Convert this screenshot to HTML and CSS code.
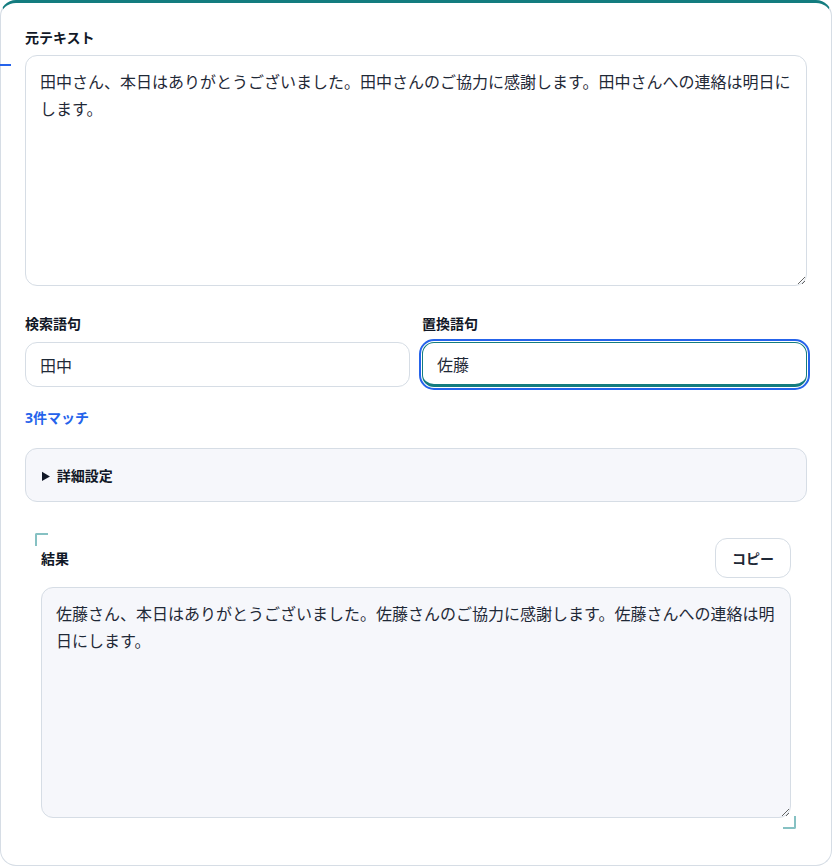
FILE: index.html
```html
<!DOCTYPE html>
<html lang="ja">
<head>
<meta charset="utf-8">
<title>置換</title>
<link rel="stylesheet" href="styles.css">
</head>
<body>
<main class="card">
  <span class="side-mark"></span>
  <label class="label" for="src">元テキスト</label>
  <textarea id="src" class="area">田中さん、本日はありがとうございました。田中さんのご協力に感謝します。田中さんへの連絡は明日にします。</textarea>

  <div class="fields">
    <div class="field">
      <label class="label label-field" for="find">検索語句</label>
      <input id="find" class="input" type="text" value="田中">
    </div>
    <div class="field">
      <label class="label label-field" for="repl">置換語句</label>
      <input id="repl" class="input input-focused" type="text" value="佐藤">
    </div>
  </div>

  <p class="matches">3件マッチ</p>

  <details class="advanced">
    <summary class="advanced-summary">詳細設定</summary>
  </details>

  <section class="result">
    <span class="bracket bracket-tl"></span>
    <span class="bracket bracket-br"></span>
    <div class="result-head">
      <span class="label result-label">結果</span>
      <button class="copy" type="button">コピー</button>
    </div>
    <textarea class="area area-result" readonly>佐藤さん、本日はありがとうございました。佐藤さんのご協力に感謝します。佐藤さんへの連絡は明日にします。</textarea>
  </section>
</main>
</body>
</html>
```
FILE: styles.css
```css
* { box-sizing: border-box; }

html, body {
  margin: 0;
  padding: 0;
  background: #ffffff;
}

body {
  font-family: "Noto Sans", "Noto Sans CJK JP", sans-serif;
  color: #1f2937;
}

.card {
  position: relative;
  width: 832px;
  height: 866px;
  background: #ffffff;
  border: 1px solid #d6dde5;
  border-top: 3px solid #137c7f;
  border-radius: 16px;
  padding: 24px 24px 24px 24px;
  display: flex;
  flex-direction: column;
}

.side-mark {
  position: absolute;
  left: -1px;
  top: 61px;
  width: 11px;
  height: 2px;
  background: #2563eb;
}

.label {
  display: block;
  font-family: "Noto Sans CJK JP", sans-serif;
  font-size: 14px;
  font-weight: 700;
  line-height: 20px;
  color: #111827;
  margin-bottom: 8px;
}

.label-field {
  margin-bottom: 9px;
}

.area {
  display: block;
  width: 100%;
  height: 231px;
  border: 1px solid #d6dde5;
  border-radius: 12px;
  padding: 12px 14px;
  font-family: "Noto Sans CJK JP", sans-serif;
  font-size: 16px;
  line-height: 27px;
  color: #1f2937;
  background: #ffffff;
  outline: none;
  resize: vertical;
}

.fields {
  margin-top: 27px;
  display: grid;
  grid-template-columns: 1fr 1fr;
  gap: 12px;
}

.field {
  display: flex;
  flex-direction: column;
}

.input {
  height: 45px;
  width: 100%;
  border: 1px solid #d6dde5;
  border-radius: 12px;
  padding: 0 14px;
  font-family: "Noto Sans CJK JP", sans-serif;
  font-size: 16px;
  color: #1f2937;
  background: #ffffff;
  outline: none;
}

.input-focused {
  border: 1px solid #137c7f;
  border-bottom-width: 3px;
  outline: 2px solid #2563eb;
  outline-offset: 1px;
}

.matches {
  margin: 21px 0 0;
  font-family: "Noto Sans", "Noto Sans CJK JP", sans-serif;
  font-size: 14px;
  font-weight: 700;
  line-height: 20px;
  color: #2563eb;
}

.advanced {
  margin-top: 20px;
  background: #f6f7fb;
  border: 1px solid #d6dde5;
  border-radius: 12px;
  padding: 16px;
}

.advanced-summary {
  font-family: "Noto Sans CJK JP", sans-serif;
  font-size: 14px;
  font-weight: 700;
  line-height: 20px;
  color: #111827;
  cursor: pointer;
}

.result {
  position: relative;
  margin-top: 16px;
  padding: 20px 16px 22px;
}

.bracket {
  position: absolute;
  width: 13px;
  height: 13px;
  border-color: #86c1c3;
  border-style: solid;
  border-width: 0;
}

.bracket-tl {
  left: 10px;
  top: 15px;
  border-top-width: 2px;
  border-left-width: 2px;
  border-top-left-radius: 2px;
}

.bracket-br {
  right: 11px;
  bottom: 11px;
  border-bottom-width: 2px;
  border-right-width: 2px;
  border-bottom-right-radius: 2px;
}

.result-head {
  display: flex;
  align-items: center;
  justify-content: space-between;
  height: 40px;
  margin-bottom: 9px;
}

.result-label {
  margin: 0;
}

.copy {
  height: 40px;
  padding: 0 16px;
  border: 1px solid #d6dde5;
  border-radius: 12px;
  background: #ffffff;
  font-family: "Noto Sans CJK JP", sans-serif;
  font-size: 14px;
  font-weight: 700;
  color: #1f2937;
  cursor: pointer;
}

.area-result {
  background: #f6f7fb;
}
```
